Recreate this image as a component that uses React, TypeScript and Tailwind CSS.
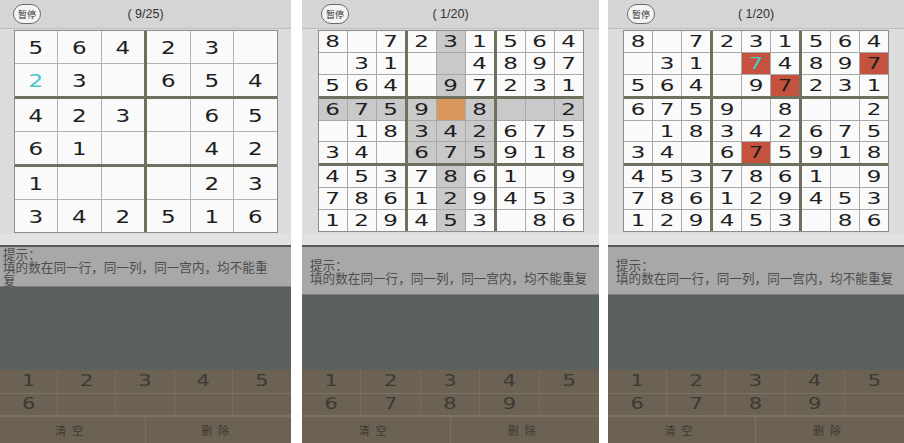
import React from 'react'

type Mark = 'sel' | 'hl' | 'err' | undefined

interface CellData {
  v: string
  mark?: Mark
  teal?: boolean
}

const SIX = ['56423.', '23.654', '423.65', '61..42', '1...23', '342516']

const NINE = [
  '8.7231564',
  '.31..4897',
  '564.97231',
  '6759.8..2',
  '.18342675',
  '34.675918',
  '4537861.9',
  '786129453',
  '129453.86',
]

function toCells(rows: string[]): CellData[][] {
  return rows.map((r) => r.split('').map((c) => ({ v: c === '.' ? '' : c })))
}

const markBg: Record<string, string> = {
  sel: 'bg-[#d9975e]',
  hl: 'bg-[#c9c9c9]',
  err: 'bg-[#c5523f]',
}

function Cell({ cell, digitClass }: { cell: CellData; digitClass: string }) {
  const bg = cell.mark ? markBg[cell.mark] : 'bg-[#fafafa]'
  return (
    <div className={`flex items-center justify-center ${bg}`}>
      {cell.v && (
        <span
          className={`inline-block leading-none font-['DejaVu_Sans',sans-serif] ${digitClass} ${
            cell.teal ? 'text-[#4cc4c4]' : 'text-[#1e1e1e]'
          }`}
        >
          {cell.v}
        </span>
      )}
    </div>
  )
}

/** 6x6 board: 2-row by 3-column boxes */
function SixBoard({ cells }: { cells: CellData[][] }) {
  const boxes = []
  for (let br = 0; br < 3; br++) {
    for (let bc = 0; bc < 2; bc++) {
      const inner = []
      for (let r = 0; r < 2; r++) {
        for (let c = 0; c < 3; c++) {
          inner.push(
            <Cell
              key={`${r}-${c}`}
              cell={cells[br * 2 + r][bc * 3 + c]}
              digitClass="text-[23px] scale-y-[0.8]"
            />
          )
        }
      }
      boxes.push(
        <div key={`${br}-${bc}`} className="grid grid-cols-3 grid-rows-2 gap-px bg-[#b2b2b2]">
          {inner}
        </div>
      )
    }
  }
  return (
    <div className="grid h-[203px] w-[264px] grid-cols-2 grid-rows-3 gap-[3px] border border-[#8c8c8c] bg-[#6f715f]">
      {boxes}
    </div>
  )
}

function NineBoard({ cells }: { cells: CellData[][] }) {
  const boxes = []
  for (let br = 0; br < 3; br++) {
    for (let bc = 0; bc < 3; bc++) {
      const inner = []
      for (let r = 0; r < 3; r++) {
        for (let c = 0; c < 3; c++) {
          inner.push(
            <Cell
              key={`${r}-${c}`}
              cell={cells[br * 3 + r][bc * 3 + c]}
              digitClass="text-[23px] scale-y-[0.68]"
            />
          )
        }
      }
      boxes.push(
        <div key={`${br}-${bc}`} className="grid grid-cols-3 grid-rows-3 gap-px bg-[#a9a9a9]">
          {inner}
        </div>
      )
    }
  }
  return (
    <div className="grid h-[202px] w-[266px] grid-cols-3 grid-rows-3 gap-[3px] border border-[#8c8c8c] bg-[#6f715f]">
      {boxes}
    </div>
  )
}

function Keypad({ max }: { max: number }) {
  const keys = Array.from({ length: 10 }, (_, i) => (i + 1 <= max ? String(i + 1) : ''))
  return (
    <div className="flex h-[73px] flex-col bg-[#6b6254]">
      {[keys.slice(0, 5), keys.slice(5)].map((row, ri) => (
        <div
          key={ri}
          className={`grid grid-cols-5 ${ri === 0 ? 'h-[24px] border-b border-[#7c7366]' : 'h-[23px] border-b-2 border-[#7c7366]'}`}
        >
          {row.map((k, i) => (
            <div
              key={i}
              className={`flex items-center justify-center ${i < 4 ? 'border-r border-[#776e61]' : ''}`}
            >
              <span className="inline-block scale-y-[0.72] font-['DejaVu_Sans',sans-serif] text-[21px] leading-none text-[#3d3933]">
                {k}
              </span>
            </div>
          ))}
        </div>
      ))}
      <div className="grid flex-1 grid-cols-2 font-['Noto_Sans_CJK_SC',sans-serif] text-[11px] tracking-[6px] text-[#3f382f]">
        <div className="flex items-center justify-center border-r border-[#7a7163]">清空</div>
        <div className="flex items-center justify-center">删除</div>
      </div>
    </div>
  )
}

interface PanelProps {
  width: string
  title: string
  btnOffset: string
  board: React.ReactNode
  hintBox: string
  hintText: string
  max: number
}

function Panel({ width, title, btnOffset, board, hintBox, hintText, max }: PanelProps) {
  return (
    <div className={`flex h-[443px] shrink-0 flex-col ${width}`}>
      {/* header */}
      <div className="grid h-[29px] grid-cols-[1fr_auto_1fr] items-center border-b border-[#bdbdbd] bg-[#d5d5d5]">
        <div className={btnOffset}>
          <div className="flex h-[20px] w-[28px] items-center justify-center rounded-full border border-[#6a6a6a] bg-[#f4f4f4] font-['Noto_Sans_CJK_SC',sans-serif] text-[9px] leading-none text-[#333]">
            暂停
          </div>
        </div>
        <div className="font-['Liberation_Sans',sans-serif] text-[12.5px] text-[#333]">{title}</div>
        <div />
      </div>

      {/* board */}
      <div className="flex h-[216px] flex-col items-center bg-[#dcdcdc] pt-[1px]">
        {board}
        <div className="mt-auto h-[11px] w-full bg-[#e2e2e2]" />
      </div>

      <div className="h-[2px] bg-[#585858]" />

      {/* hint */}
      <div className={`flex flex-col justify-center border-b border-[#7d7d7d] bg-[#a8a8a8] ${hintBox}`}>
        <div
          className={`font-['Noto_Sans_CJK_SC',sans-serif] text-[12.6px] leading-[13px] text-[#4d4d4d] ${hintText}`}
        >
          <div>提示：</div>
          <div>填的数在同一行，同一列，同一宫内，均不能重复</div>
        </div>
      </div>

      <div className="flex-1 bg-[#5b625e]" />

      <Keypad max={max} />
    </div>
  )
}

export default function App() {
  const six = toCells(SIX)
  six[1][0].teal = true

  const second = toCells(NINE)
  for (let r = 0; r < 9; r++) {
    for (let c = 0; c < 9; c++) {
      const inBox = r >= 3 && r <= 5 && c >= 3 && c <= 5
      if (r === 3 || c === 4 || inBox) second[r][c].mark = 'hl'
    }
  }
  second[3][4].mark = 'sel'

  const third = toCells(NINE)
  third[1][4] = { v: '7', mark: 'err', teal: true }
  third[1][8].mark = 'err'
  third[2][5].mark = 'err'
  third[5][4].mark = 'err'

  return (
    <div className="flex h-[443px] w-[904px] overflow-hidden bg-white">
      <Panel
        width="w-[291px]"
        title="( 9/25)"
        btnOffset="pl-[13px]"
        board={<SixBoard cells={six} />}
        hintBox="h-[40px] pl-[3px]"
        hintText="w-[272px]"
        max={6}
      />
      <div className="w-[11px] shrink-0" />
      <Panel
        width="w-[297px]"
        title="( 1/20)"
        btnOffset="pl-[19px]"
        board={<NineBoard cells={second} />}
        hintBox="h-[48px] pl-[8px]"
        hintText="whitespace-nowrap"
        max={9}
      />
      <div className="w-[9px] shrink-0" />
      <Panel
        width="w-[296px]"
        title="( 1/20)"
        btnOffset="pl-[19px]"
        board={<NineBoard cells={third} />}
        hintBox="h-[48px] pl-[8px]"
        hintText="whitespace-nowrap"
        max={9}
      />
    </div>
  )
}
